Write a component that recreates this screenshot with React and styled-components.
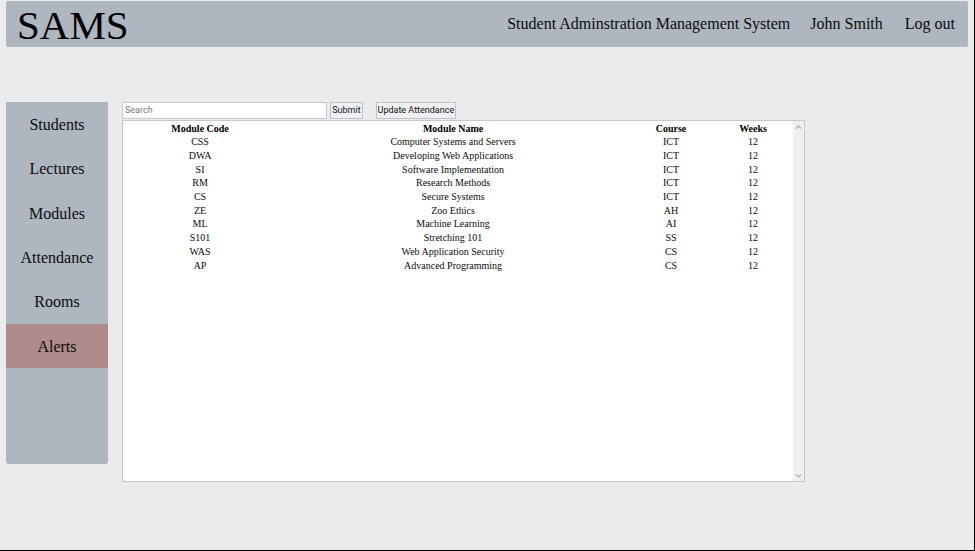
import React from 'react';
import styled, { createGlobalStyle } from 'styled-components';

const GlobalStyle = createGlobalStyle`
  *, *::before, *::after { box-sizing: border-box; }
  body {
    margin: 0;
    background: #eaebed;
    color: #0b0b0d;
    font-family: "Liberation Serif", serif;
  }
`;

const Page = styled.div`
  min-height: 100vh;
  padding: 1px 6px 0 6px;
  border-right: 1px solid #000;
  border-bottom: 1px solid #000;
`;

const Header = styled.header`
  display: flex;
  align-items: center;
  justify-content: space-between;
  height: 46px;
  padding: 0 13px 0 11px;
  background: #aeb6bf;
  border-radius: 2px;
`;

const Brand = styled.h1`
  margin: 0;
  padding-top: 2px;
  font-size: 41px;
  line-height: 42px;
  font-weight: 400;
  color: #000;
`;

const HeaderLinks = styled.nav`
  display: flex;
  align-items: center;
  font-size: 16px;
  line-height: 20px;
`;

const HeaderText = styled.span`
  margin-right: 20px;
`;

const PlainLink = styled.a`
  color: inherit;
  text-decoration: none;
`;

const UserLink = styled(PlainLink)`
  margin-right: 22px;
`;

const Body = styled.div`
  display: flex;
  align-items: flex-start;
  gap: 14px;
  margin-top: 55px;
`;

const Sidebar = styled.nav`
  flex: 0 0 102px;
  min-height: 362px;
  background: #aeb6bf;
  border-radius: 0 0 3px 3px;
`;

const MenuList = styled.ul`
  display: grid;
  grid-auto-rows: 1fr;
  min-height: 266px;
  margin: 0;
  padding: 0;
  list-style: none;
`;

const MenuLink = styled(PlainLink)`
  display: flex;
  align-items: center;
  justify-content: center;
  height: 100%;
  padding-top: 2px;
  font-size: 16px;
  line-height: 20px;
  background: ${({ $alert }) => ($alert ? '#b08b8b' : 'transparent')};
`;

const Content = styled.main`
  flex: 0 0 71%;
`;

const Toolbar = styled.form`
  display: flex;
  align-items: stretch;
  height: 17px;
  margin-bottom: 1px;
  font-family: Roboto, sans-serif;
`;

const SearchInput = styled.input`
  width: 30%;
  margin: 0 3px 0 0;
  padding: 0 2px;
  border: 1px solid #c6cbd1;
  background: #fff;
  color: #222;
  font-family: inherit;
  font-size: 9px;
  line-height: 13px;
  &::placeholder { color: #77787a; opacity: 1; }
`;

const ToolButton = styled.button`
  flex: none;
  width: ${({ $wide }) => ($wide ? '80px' : '33px')};
  margin: 0 13px 0 0;
  padding: 0;
  border: 1px solid #bcc3ca;
  background: #eff0f1;
  color: #111;
  font-family: inherit;
  font-size: 9px;
  line-height: 13px;
  white-space: nowrap;
`;

const Panel = styled.section`
  display: flex;
  min-height: 362px;
  border: 1px solid #c3c9cf;
  background: #fff;
`;

const PanelBody = styled.div`
  flex: 1;
`;

const ModuleTable = styled.table`
  width: 100%;
  height: 151px;
  border-collapse: collapse;
  table-layout: fixed;
  font-size: 10px;
  line-height: 12px;
  text-align: center;
`;

const Col = styled.col`
  width: ${({ $width }) => $width};
`;

const HeadCell = styled.th`
  height: 14px;
  padding: 1px 0 0;
  font-weight: 700;
  color: #000;
`;

const Cell = styled.td`
  padding: 1px 0 0;
`;

const ScrollTrack = styled.div`
  display: flex;
  flex-direction: column;
  align-items: center;
  justify-content: space-between;
  flex: 0 0 11px;
  padding: 3px 0 2px;
  background: #f0f0f0;
`;

const ArrowIcon = styled.svg`
  width: 7px;
  height: 6px;
  fill: none;
  stroke: #b4b4b4;
  stroke-width: 1.5;
`;

const MENU = ['Students', 'Lectures', 'Modules', 'Attendance', 'Rooms', 'Alerts'];

const COLUMNS = [
  { label: 'Module Code', width: '23%' },
  { label: 'Module Name', width: 'auto' },
  { label: 'Course', width: '84px' },
  { label: 'Weeks', width: '80px' },
];

const MODULES = [
  ['CSS', 'Computer Systems and Servers', 'ICT', '12'],
  ['DWA', 'Developing Web Applications', 'ICT', '12'],
  ['SI', 'Software Implementation', 'ICT', '12'],
  ['RM', 'Research Methods', 'ICT', '12'],
  ['CS', 'Secure Systems', 'ICT', '12'],
  ['ZE', 'Zoo Ethics', 'AH', '12'],
  ['ML', 'Machine Learning', 'AI', '12'],
  ['S101', 'Stretching 101', 'SS', '12'],
  ['WAS', 'Web Application Security', 'CS', '12'],
  ['AP', 'Advanced Programming', 'CS', '12'],
];

export default function App() {
  return (
    <Page>
      <GlobalStyle />
      <Header>
        <Brand>SAMS</Brand>
        <HeaderLinks aria-label="Account">
          <HeaderText>Student Adminstration Management System</HeaderText>
          <UserLink href="#profile">John Smith</UserLink>
          <PlainLink href="#logout">Log out</PlainLink>
        </HeaderLinks>
      </Header>
      <Body>
        <Sidebar aria-label="Main">
          <MenuList>
            {MENU.map((item) => (
              <li key={item}>
                <MenuLink href={`#${item.toLowerCase()}`} $alert={item === 'Alerts'}>
                  {item}
                </MenuLink>
              </li>
            ))}
          </MenuList>
        </Sidebar>
        <Content>
          <Toolbar onSubmit={(event) => event.preventDefault()}>
            <SearchInput type="text" placeholder="Search" aria-label="Search" />
            <ToolButton type="submit">Submit</ToolButton>
            <ToolButton type="button" $wide>Update Attendance</ToolButton>
          </Toolbar>
          <Panel>
            <PanelBody>
              <ModuleTable>
                <colgroup>
                  {COLUMNS.map(({ label, width }) => (
                    <Col key={label} $width={width} />
                  ))}
                </colgroup>
                <thead>
                  <tr>
                    {COLUMNS.map(({ label }) => (
                      <HeadCell key={label} scope="col">{label}</HeadCell>
                    ))}
                  </tr>
                </thead>
                <tbody>
                  {MODULES.map((row) => (
                    <tr key={row[0]}>
                      {row.map((value, index) => (
                        <Cell key={COLUMNS[index].label}>{value}</Cell>
                      ))}
                    </tr>
                  ))}
                </tbody>
              </ModuleTable>
            </PanelBody>
            <ScrollTrack aria-hidden="true">
              <ArrowIcon viewBox="0 0 7 6"><path d="M1 4.5 3.5 2 6 4.5" /></ArrowIcon>
              <ArrowIcon viewBox="0 0 7 6"><path d="M1 1.5 3.5 4 6 1.5" /></ArrowIcon>
            </ScrollTrack>
          </Panel>
        </Content>
      </Body>
    </Page>
  );
}
